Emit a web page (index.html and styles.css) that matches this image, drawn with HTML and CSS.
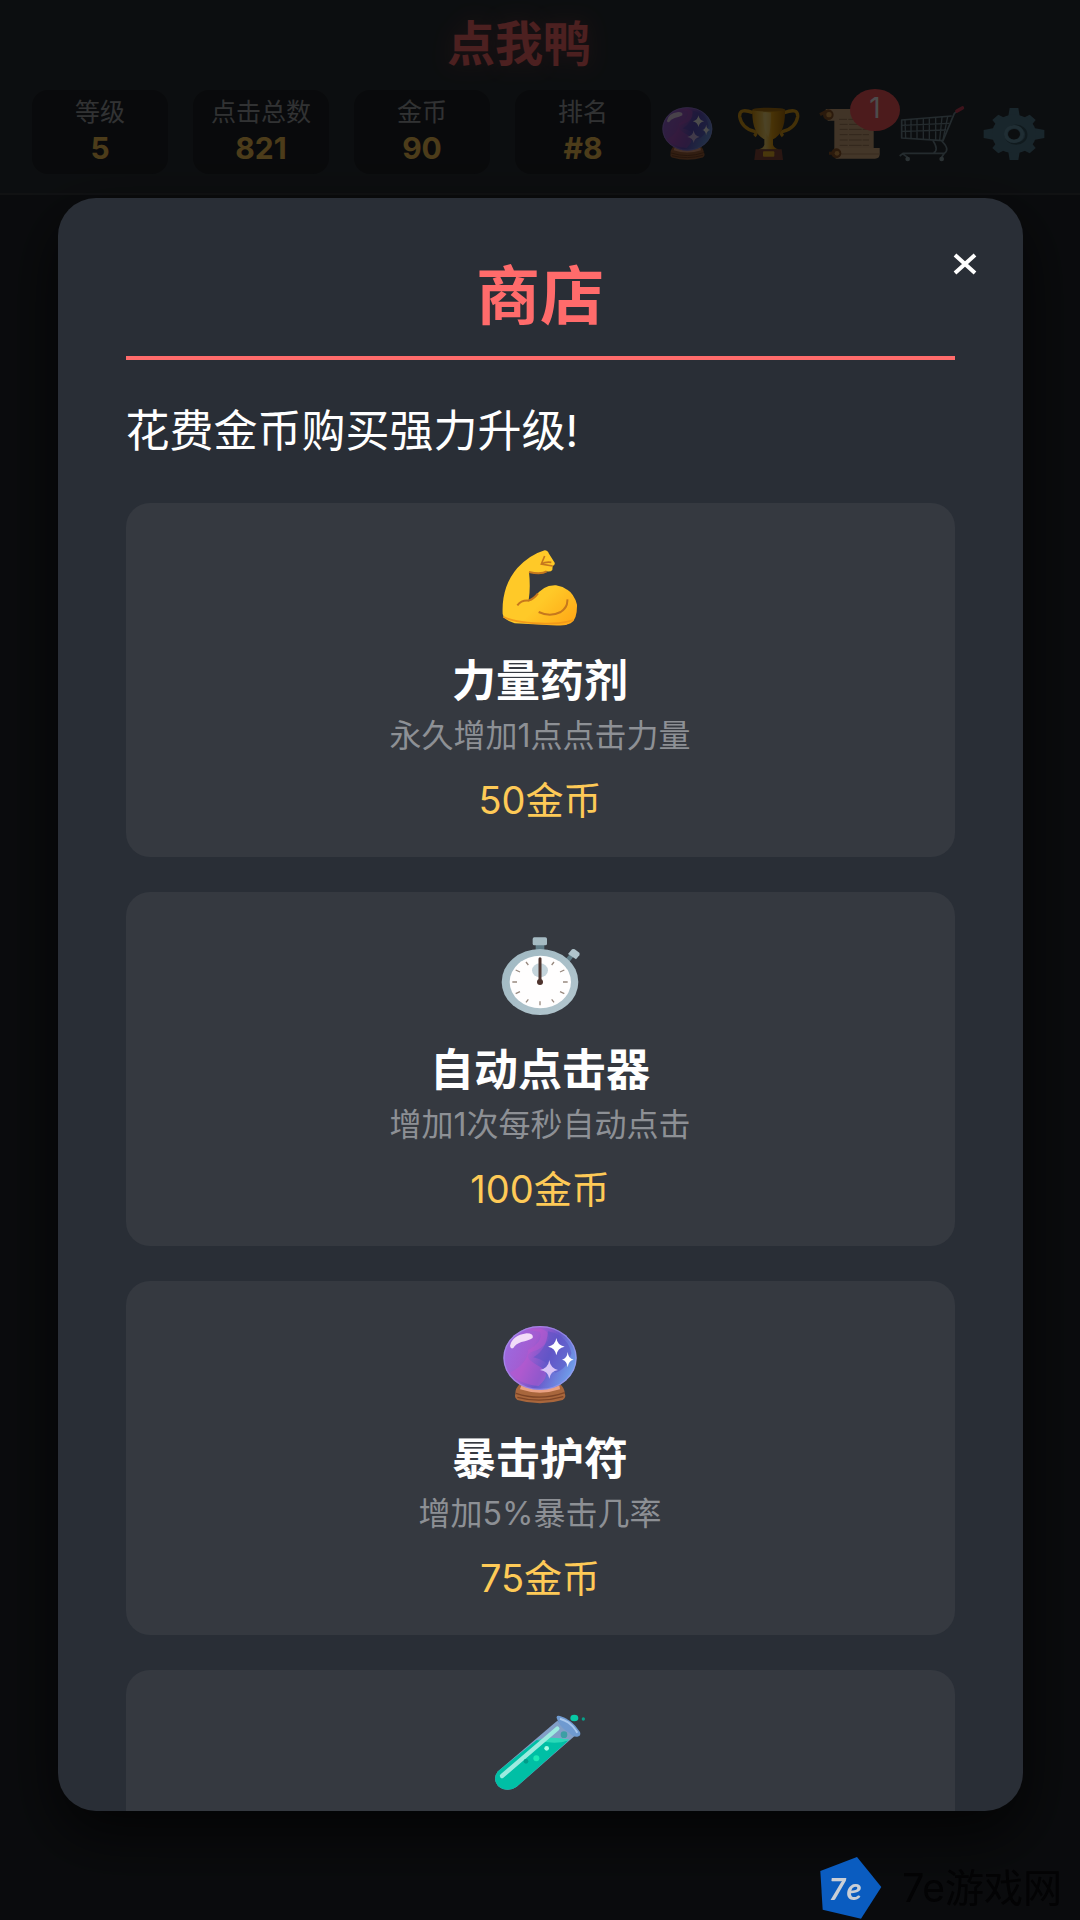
FILE: index.html
```html
<!DOCTYPE html>
<html lang="zh-CN">

<head>
    <meta charset="UTF-8">
    <meta name="viewport" content="width=device-width, initial-scale=1.0">
    <title>点我鸭</title>
    <link rel="stylesheet" href="styles.css">
</head>

<body>

    <!-- shared icon, used in the header and in the shop -->
    <svg class="defs" aria-hidden="true">
        <defs>
            <linearGradient id="ballFill" x1="0" y1="0.3" x2="1" y2="0.7">
                <stop offset="0" stop-color="#9b6be0" />
                <stop offset="0.35" stop-color="#a45bd0" />
                <stop offset="0.6" stop-color="#6858ca" />
                <stop offset="1" stop-color="#70a8ee" />
            </linearGradient>
            <linearGradient id="cupFill" x1="0" y1="0" x2="1" y2="0">
                <stop offset="0" stop-color="#e09a10" />
                <stop offset="0.4" stop-color="#ffdc70" />
                <stop offset="0.6" stop-color="#f0aa18" />
                <stop offset="1" stop-color="#b87508" />
            </linearGradient>
            <linearGradient id="armFill" x1="0" y1="0" x2="1" y2="1">
                <stop offset="0.6" stop-color="#ffc928" />
                <stop offset="1" stop-color="#ffa414" />
            </linearGradient>
            <linearGradient id="steel" x1="0" y1="0" x2="1" y2="1">
                <stop offset="0" stop-color="#9fb8c2" />
                <stop offset="1" stop-color="#b3c6ce" />
            </linearGradient>
            <symbol id="ball" viewBox="36 21 288 288">
                <path d="M120 222 Q105 235 106 252 Q102 262 112 270 Q180 290 248 270 Q260 262 254 250 Q254 234 240 222Z" fill="#a8663c" />
                <path d="M124 226 Q180 250 238 226 L240 238 Q180 258 120 238Z" fill="#eaa183" />
                <path d="M108 250 Q180 274 254 248 M112 262 Q180 280 250 260" fill="none" stroke="#7c4426" stroke-width="4" />
                <ellipse cx="180" cy="144" rx="110" ry="96" fill="url(#ballFill)" />
                <path d="M128 58 Q218 44 204 92 Q184 118 160 124 Q120 138 176 168 Q220 190 176 228 Q116 222 90 188 Q144 160 144 120 Q190 96 180 66Z" fill="#b958cd" opacity="0.5" />
                <path d="M204 64 Q200 120 160 142 Q202 150 226 188 Q262 176 274 130 Q264 76 204 64Z" fill="#5b54c4" opacity="0.55" />
                <ellipse cx="180" cy="144" rx="108" ry="94" fill="none" stroke="#a99af0" stroke-width="4" opacity="0.6" />
                <path d="M90 108 Q96 76 140 70 Q162 70 158 84 Q146 92 124 96 Q106 102 100 114 Q92 118 90 108Z" fill="#f2dcf8" />
                <path d="M229 84 Q232 106 254 110 Q232 114 229 136 Q226 114 204 110 Q226 106 229 84Z" fill="#fff" />
                <path d="M263 126 Q265 146 281 149 Q265 152 263 172 Q261 152 246 149 Q261 146 263 126Z" fill="#fff" />
                <path d="M208 150 Q211 174 234 180 Q211 184 208 206 Q205 184 180 180 Q205 174 208 150Z" fill="#d9c4f6" />
            </symbol>
        </defs>
    </svg>

    <header class="topbar">
        <h1 class="logo">点我鸭</h1>
        <div class="topbar-row">
            <div class="stats">
                <div class="stat">
                    <span class="stat-label">等级</span>
                    <span class="stat-value">5</span>
                </div>
                <div class="stat">
                    <span class="stat-label">点击总数</span>
                    <span class="stat-value">821</span>
                </div>
                <div class="stat">
                    <span class="stat-label">金币</span>
                    <span class="stat-value">90</span>
                </div>
                <div class="stat">
                    <span class="stat-label">排名</span>
                    <span class="stat-value">#8</span>
                </div>
            </div>
            <nav class="tools">
                <button class="tool" aria-label="水晶球">
                    <svg viewBox="51 96 186 180"><use href="#ball" x="47" y="93" width="196" height="196" /></svg>
                </button>
                <button class="tool" aria-label="成就">
                    <svg viewBox="297 96 186 180">
                        <path d="M342 128 Q300 112 302 140 Q308 174 346 184 Q356 188 346 198 M436 128 Q478 112 476 140 Q470 174 432 184 Q422 188 432 198" fill="none" stroke="#e5a31b" stroke-width="10" />
                        <path d="M350 238 H428 L432 270 H346Z" fill="#8c4b3d" />
                        <path d="M340 120 Q389 110 438 120 Q440 190 402 208 V224 Q404 234 420 238 H358 Q374 234 376 224 V208 Q338 190 340 120Z" fill="url(#cupFill)" />
                        <ellipse cx="389" cy="119" rx="49" ry="6" fill="#b47a12" />
                        <path d="M372 128 Q372 180 388 202 Q396 180 396 128Z" fill="#ffe690" opacity="0.5" />
                        <rect x="372" y="244" width="34" height="16" rx="3" fill="#f4b729" />
                    </svg>
                </button>
                <button class="tool" aria-label="任务">
                    <svg viewBox="543 96 186 180">
                        <path d="M560 117 H690 Q704 118 704 132 V236 H586 V152 H566Z" fill="#d9b084" />
                        <path d="M586 234 H722 V252 Q722 266 708 266 H590Z" fill="#e0b588" />
                        <path d="M600 148 H690 M602 163 H690 M602 178 H690 M602 194 H690 M602 210 H690 M602 226 H690" fill="none" stroke="#a57f5b" stroke-width="3" stroke-dasharray="24 4 38 3" />
                        <path d="M606 252 H722" stroke="#b88d62" stroke-width="3" />
                        <path d="M543 134 L562 124 M570 250 H582" stroke="#91572b" stroke-width="9" />
                        <circle cx="568" cy="134" r="16" fill="#91572b" />
                        <circle cx="570" cy="134" r="8" fill="#e0a252" />
                        <circle cx="592" cy="250" r="15" fill="#91572b" />
                        <circle cx="594" cy="250" r="7" fill="#e0a252" />
                    </svg>
                    <span class="badge">1</span>
                </button>
                <button class="tool" aria-label="商店">
                    <svg viewBox="789 96 186 180">
                        <g fill="none" stroke="#78909c" stroke-width="5" stroke-linejoin="round">
                            <path d="M964 117 L946 130 L912 212 L788 204 V150 L938 138" />
                            <path d="M798 150 L800 204 M816 148 V206 M834 147 V207 M853 146 V208 M871 145 V209 M890 143 V210 M909 141 L902 211 M926 140 L912 210 M788 166 L930 160 M788 184 L922 180" stroke-width="4" />
                            <path d="M882 212 Q900 240 884 248 M908 213 Q934 238 916 250 H792 L782 258 M790 251 L806 262 M916 250 L908 262" />
                        </g>
                        <circle cx="806" cy="267" r="7" fill="#92a8b0" />
                        <circle cx="908" cy="267" r="7" fill="#92a8b0" />
                        <path d="M954 123 L970 114" stroke="#d0415b" stroke-width="11" stroke-linecap="round" />
                    </svg>
                </button>
                <button class="tool" aria-label="设置">
                    <svg viewBox="1035 96 186 180">
                        <g fill="#557f93">
                            <path d="M1112 114 H1138 L1143 144 H1107Z M1112 270 H1138 L1143 240 H1107Z M1034 180 V204 L1066 210 V174Z M1216 180 V204 L1184 210 V174Z" />
                            <path d="M1060 150 L1078 134 L1105 148 L1078 172Z M1190 150 L1172 134 L1145 148 L1172 172Z M1060 234 L1078 250 L1105 236 L1078 212Z M1190 234 L1172 250 L1145 236 L1172 212Z" />
                            <path fill-rule="evenodd" d="M1125 134 A66 58 0 1 1 1125 250 A66 58 0 1 1 1125 134Z M1125 177 A18 16 0 1 0 1125 209 A18 16 0 1 0 1125 177Z" />
                        </g>
                        <ellipse cx="1131" cy="194" rx="31" ry="27" fill="none" stroke="#375866" stroke-width="7" />
                        <ellipse cx="1125" cy="192" rx="25" ry="22" fill="none" stroke="#6b9bb0" stroke-width="10" />
                    </svg>
                </button>
            </nav>
        </div>
    </header>

    <div class="overlay">
        <section class="modal" role="dialog" aria-labelledby="shopTitle">
            <button class="close" aria-label="关闭">
                <svg viewBox="0 0 24 24"><path d="M2 3 L22 21 M22 3 L2 21" /></svg>
            </button>
            <h2 class="modal-title" id="shopTitle">商店</h2>
            <p class="intro">花费金币购买强力升级!</p>

            <div class="shop-list">
                <article class="item">
                    <svg class="item-icon" viewBox="36 27 288 288">
                        <path d="M68 252 Q64 170 112 114 Q150 74 194 61 Q204 62 206 70 L224 98 Q226 104 218 108 L217 120 Q212 126 200 124 Q182 136 147 126 Q152 174 146 210 Q152 212 162 204 Q188 164 228 166 Q278 174 291 224 Q292 270 272 280 Q258 288 214 286 L104 280 Q70 270 68 252Z" fill="url(#armFill)" />
                        <path d="M147 126 Q184 134 200 124 M112 226 Q124 210 146 212 Q162 206 174 190 M176 246 Q210 262 242 246 Q264 232 262 208" fill="none" stroke="#c6781d" stroke-width="6" />
                        <path d="M194 78 L184 102 L218 108 M184 102 Q198 94 214 97" fill="none" stroke="#c6781d" stroke-width="5" />
                        <path d="M70 260 Q96 276 180 280 Q240 284 280 270" fill="none" stroke="#f29a1a" stroke-width="5" />
                    </svg>
                    <h3 class="item-name">力量药剂</h3>
                    <p class="item-desc">永久增加1点点击力量</p>
                    <p class="item-price">50金币</p>
                </article>

                <article class="item">
                    <svg class="item-icon" viewBox="36 24 288 288">
                        <path d="M167 70 H193 V96 H167Z" fill="#607d88" />
                        <rect x="158" y="52" width="43" height="24" rx="5" fill="#a5bbc3" />
                        <path d="M256 118 L272 100 L282 108 L268 126Z" fill="#607d88" />
                        <path d="M264 102 L276 88 Q280 86 284 88 L298 98 Q300 102 298 106 L288 118Z" fill="#b0c4cc" />
                        <ellipse cx="180" cy="186" rx="115" ry="99" fill="url(#steel)" />
                        <ellipse cx="181" cy="186" rx="92" ry="79" fill="#fffefe" />
                        <ellipse cx="180" cy="151" rx="24" ry="21" fill="#c4d4db" />
                        <path d="M97 186 H111 M249 186 H263 M180 244 V256 M138 126 L145 135 M222 126 L215 135 M107 150 L120 156 M253 150 L240 156 M107 221 L120 215 M253 221 L240 215 M138 247 L145 238 M222 247 L215 238" stroke="#98897f" stroke-width="4" />
                        <path d="M180 116 V184" stroke="#4e342e" stroke-width="9" stroke-linecap="round" />
                        <circle cx="180" cy="186" r="9" fill="#4e342e" />
                    </svg>
                    <h3 class="item-name">自动点击器</h3>
                    <p class="item-desc">增加1次每秒自动点击</p>
                    <p class="item-price">100金币</p>
                </article>

                <article class="item">
                    <svg class="item-icon"><use href="#ball" /></svg>
                    <h3 class="item-name">暴击护符</h3>
                    <p class="item-desc">增加5%暴击几率</p>
                    <p class="item-price">75金币</p>
                </article>

                <article class="item">
                    <svg class="item-icon" viewBox="36 18 288 288">
                        <path d="M232 62 L54 214 Q36 236 54 258 Q82 280 110 260 L284 108Z" fill="#829fc7" />
                        <path d="M170 120 Q220 132 266 121 L110 260 Q82 280 54 258 Q36 236 54 214Z" fill="#00bfa5" />
                        <path d="M172 119 Q214 108 268 119 Q226 138 172 119Z" fill="#2bd8b8" />
                        <path d="M230 54 Q228 46 240 48 Q276 58 300 96 Q304 108 292 110 Q280 112 268 98 Q240 84 230 54Z" fill="#6f9ad0" />
                        <path d="M240 56 Q274 66 292 98" fill="none" stroke="#a8c7ec" stroke-width="6" />
                        <path d="M232 86 L66 228" stroke="#9cebe0" stroke-width="13" stroke-linecap="round" />
                        <circle cx="252" cy="104" r="10" fill="#3d9fa5" />
                        <circle cx="200" cy="145" r="7" fill="#a7fbe5" />
                        <circle cx="169" cy="175" r="9" fill="#1de9b6" />
                        <circle cx="138" cy="184" r="7" fill="#009c89" />
                        <ellipse cx="283" cy="54" rx="12" ry="10" fill="#08c9a6" />
                        <circle cx="310" cy="57" r="5" fill="#079f89" />
                    </svg>
                </article>
            </div>
        </section>
    </div>

    <div class="watermark">
        <svg class="watermark-logo" viewBox="88 230 184 186">
            <path d="M88 272 L198 230 L271 320 L210 415 L95 388Z" />
            <text x="112" y="358">7e</text>
        </svg>
        <span>7e游戏网</span>
    </div>

</body>

</html>
```
FILE: styles.css
```css
* {
    box-sizing: border-box;
}

body {
    margin: 0;
    min-height: 100vh;
    background-color: #23272d;
    color: #fff;
    font-family: Inter, "Noto Sans CJK SC", sans-serif;
    overflow: hidden;
}

h1,
h2,
h3,
p {
    margin: 0;
}

button {
    padding: 0;
    border: 0;
    background: none;
    color: inherit;
    font-family: inherit;
    cursor: pointer;
}

svg {
    display: block;
    overflow: visible;
}

.defs {
    position: absolute;
    width: 0;
    height: 0;
}

/* Header */
.topbar {
    padding: 14px 34px 19px 32px;
    background-color: #2b3036;
    border-bottom: 2px solid #393d42;
}

.logo {
    padding-right: 40px;
    color: #ff6b6b;
    font-size: 48px;
    line-height: 60px;
    text-align: center;
    text-shadow: 0 0 20px rgba(255, 107, 107, 0.3);
}

.topbar-row {
    display: flex;
    align-items: center;
    gap: 5px;
    margin-top: 16px;
}

.stats {
    display: grid;
    flex: 1;
    grid-template-columns: repeat(4, 1fr);
    gap: 25px;
}

.stat {
    display: flex;
    flex-direction: column;
    align-items: center;
    padding: 6px 0;
    border-radius: 16px;
    background-color: #1f2328;
}

.stat-label {
    color: #a5a8ac;
    font-size: 25px;
    line-height: 32px;
    white-space: nowrap;
}

.stat-value {
    color: #feca57;
    font-size: 30px;
    font-weight: 700;
    line-height: 40px;
}

.tools {
    display: flex;
    gap: 20px;
}

.tool {
    position: relative;
    width: 62px;
    height: 60px;
}

.tool svg {
    width: 62px;
    height: 60px;
}

.badge {
    position: absolute;
    top: -13px;
    right: -18px;
    width: 50px;
    height: 42px;
    border-radius: 50%;
    background-color: #ff5a60;
    font-size: 28px;
    line-height: 38px;
}

/* Shop modal */
.overlay {
    position: fixed;
    inset: 0;
    display: flex;
    align-items: center;
    justify-content: center;
    padding-top: 89px;
    background-color: rgba(0, 0, 0, 0.7);
}

.modal {
    position: relative;
    width: calc(100% - 115px);
    height: 84vh;
    padding: 60px 68px;
    border-radius: 38px;
    background-color: #292e36;
    box-shadow: 0 24px 60px rgba(0, 0, 0, 0.7);
    overflow-y: auto;
    scrollbar-width: none;
}

.close {
    position: absolute;
    top: 54px;
    right: 46px;
}

.close svg {
    width: 24px;
    height: 24px;
    fill: none;
    stroke: #fff;
    stroke-width: 4;
}

.modal-title {
    padding-bottom: 22px;
    border-bottom: 4px solid #ff6b6b;
    color: #ff6b6b;
    font-size: 64px;
    line-height: 76px;
    text-align: center;
}

.intro {
    padding: 43px 0 44px;
    font-size: 44px;
    line-height: 56px;
}

.shop-list {
    display: flex;
    flex-direction: column;
    gap: 35px;
}

.item {
    min-height: 354px;
    padding: 36px 24px 32px;
    border-radius: 24px;
    background-color: #353940;
    text-align: center;
}

.item-icon {
    width: 96px;
    height: 96px;
    margin: 0 auto 14px;
}

.item-name {
    font-size: 44px;
    line-height: 64px;
}

.item-desc {
    color: #8d9095;
    font-size: 32px;
    line-height: 46px;
}

.item-price {
    margin-top: 16px;
    color: #feca57;
    font-size: 38px;
    line-height: 50px;
}

/* Site mark */
.watermark {
    position: fixed;
    right: 18px;
    bottom: 1px;
    display: flex;
    align-items: center;
    gap: 20px;
    color: #030304;
    font-size: 39px;
    line-height: 62px;
}

.watermark-logo {
    width: 62px;
    height: 62px;
    fill: #0a5cc0;
}

.watermark-logo text {
    fill: #c9ced6;
    font-family: Lato, sans-serif;
    font-size: 94px;
    font-style: italic;
    font-weight: 700;
}
```
